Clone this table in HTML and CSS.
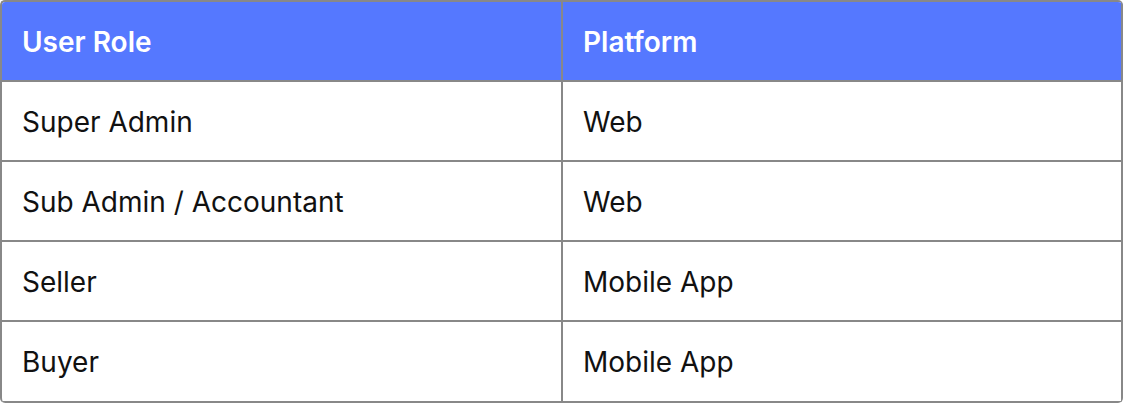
FILE: index.html
```html
<!DOCTYPE html>
<html>
<head>
<meta charset="utf-8">
<link rel="stylesheet" href="styles.css">
</head>
<body>
<table class="roles">
  <thead>
    <tr><th class="col-role">User Role</th><th>Platform</th></tr>
  </thead>
  <tbody>
    <tr><td>Super Admin</td><td>Web</td></tr>
    <tr><td>Sub Admin / Accountant</td><td>Web</td></tr>
    <tr><td>Seller</td><td>Mobile App</td></tr>
    <tr class="last"><td>Buyer</td><td>Mobile App</td></tr>
  </tbody>
</table>
</body>
</html>
```
FILE: styles.css
```css
html, body {
  margin: 0;
  padding: 0;
  background: #ffffff;
}
.roles {
  width: 1123px;
  border-collapse: separate;
  border-spacing: 0;
  border-top: 2px solid #888888;
  border-left: 2px solid #888888;
  border-radius: 5px;
  overflow: hidden;
  font-family: Inter, "Liberation Sans", sans-serif;
  font-size: 28px;
  color: #111111;
  table-layout: fixed;
}
.roles th, .roles td {
  border-right: 2px solid #888888;
  border-bottom: 2px solid #888888;
  padding: 3px 0 0 20px;
  text-align: left;
  vertical-align: middle;
  box-sizing: border-box;
  line-height: 1.2;
}
.roles th {
  height: 80px;
  background: #5578ff;
  color: #ffffff;
  font-weight: 600;
}
.roles td {
  height: 80px;
}
.roles .col-role {
  width: 561px;
}
.roles .last td {
  height: 81px;
}
```
